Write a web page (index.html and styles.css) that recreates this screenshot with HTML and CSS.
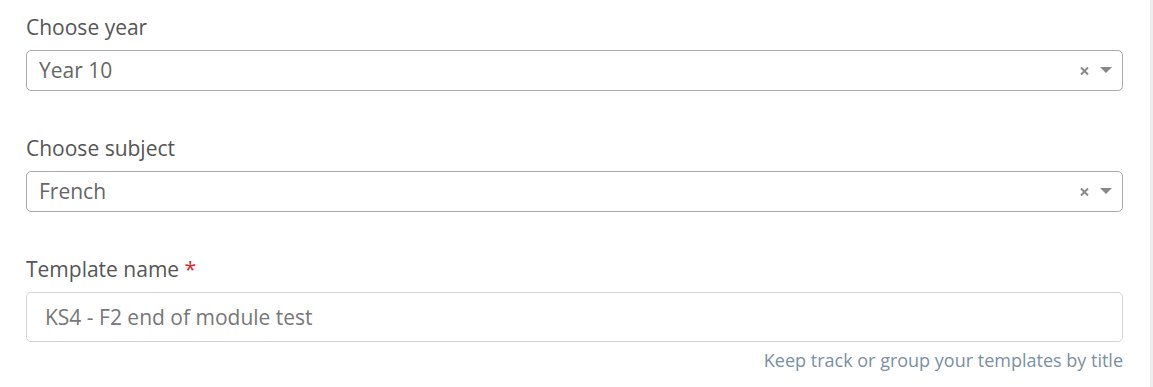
FILE: index.html
```html
<!DOCTYPE html>
<html lang="en">
<head>
<meta charset="utf-8">
<title>Template</title>
<link rel="stylesheet" href="styles.css">
</head>
<body>
<div class="page">
  <form class="form">
    <div class="group">
      <label class="label">Choose year</label>
      <div class="select">
        <span class="select-value">Year 10</span>
        <span class="select-clear"><svg width="9" height="8" viewBox="0 0 9 8"><path d="M1 0.5 L8 7.5 M8 0.5 L1 7.5" stroke="#888" stroke-width="2"/></svg></span>
        <span class="select-arrow"></span>
      </div>
    </div>
    <div class="group">
      <label class="label">Choose subject</label>
      <div class="select">
        <span class="select-value">French</span>
        <span class="select-clear"><svg width="9" height="8" viewBox="0 0 9 8"><path d="M1 0.5 L8 7.5 M8 0.5 L1 7.5" stroke="#888" stroke-width="2"/></svg></span>
        <span class="select-arrow"></span>
      </div>
    </div>
    <div class="group last">
      <label class="label">Template name <span class="req">*</span></label>
      <div class="input">KS4 - F2 end of module test</div>
      <p class="help">Keep track or group your templates by title</p>
    </div>
  </form>
  <div class="edge"></div>
</div>
</body>
</html>
```

FILE: styles.css
```css
* { box-sizing: border-box; }
html, body { margin: 0; padding: 0; background: #fff; }
body { font-family: "Open Sans", "Liberation Sans", sans-serif; }
.page {
  display: flex;
  width: 1153px;
  height: 387px;
  overflow: hidden;
}
.form {
  flex: 0 0 1150px;
  padding: 12px 27px 0 26px;
  margin: 0;
}
.edge {
  flex: 1;
  background: #eeeeee;
}
.group { margin-bottom: 42px; }
.group.last { margin-bottom: 0; }
.label {
  display: block;
  font-size: 21px;
  line-height: 30px;
  color: #555;
  margin-bottom: 8px;
}
.req { color: #e0242b; }
.select {
  display: flex;
  align-items: center;
  height: 41px;
  border: 1px solid #aaa;
  border-radius: 5px;
  padding: 0 10px 0 12px;
}
.select-value {
  flex: 1;
  font-size: 21px;
  line-height: 39px;
  color: #666;
}
.select-clear {
  display: flex;
  margin-right: 11px;
  margin-top: 1px;
}
.select-arrow {
  width: 0;
  height: 0;
  border-style: solid;
  border-width: 6px 6px 0 6px;
  border-color: #888 transparent transparent transparent;
  margin-top: -1px;
}
.input {
  height: 50px;
  border: 1px solid #d4d4d4;
  border-radius: 5px;
  padding: 0 18px;
  font-size: 21px;
  line-height: 48px;
  color: #777;
}
.help {
  margin: 5px 0 0;
  text-align: right;
  font-size: 18px;
  line-height: 26px;
  color: #7a90a3;
}
```
